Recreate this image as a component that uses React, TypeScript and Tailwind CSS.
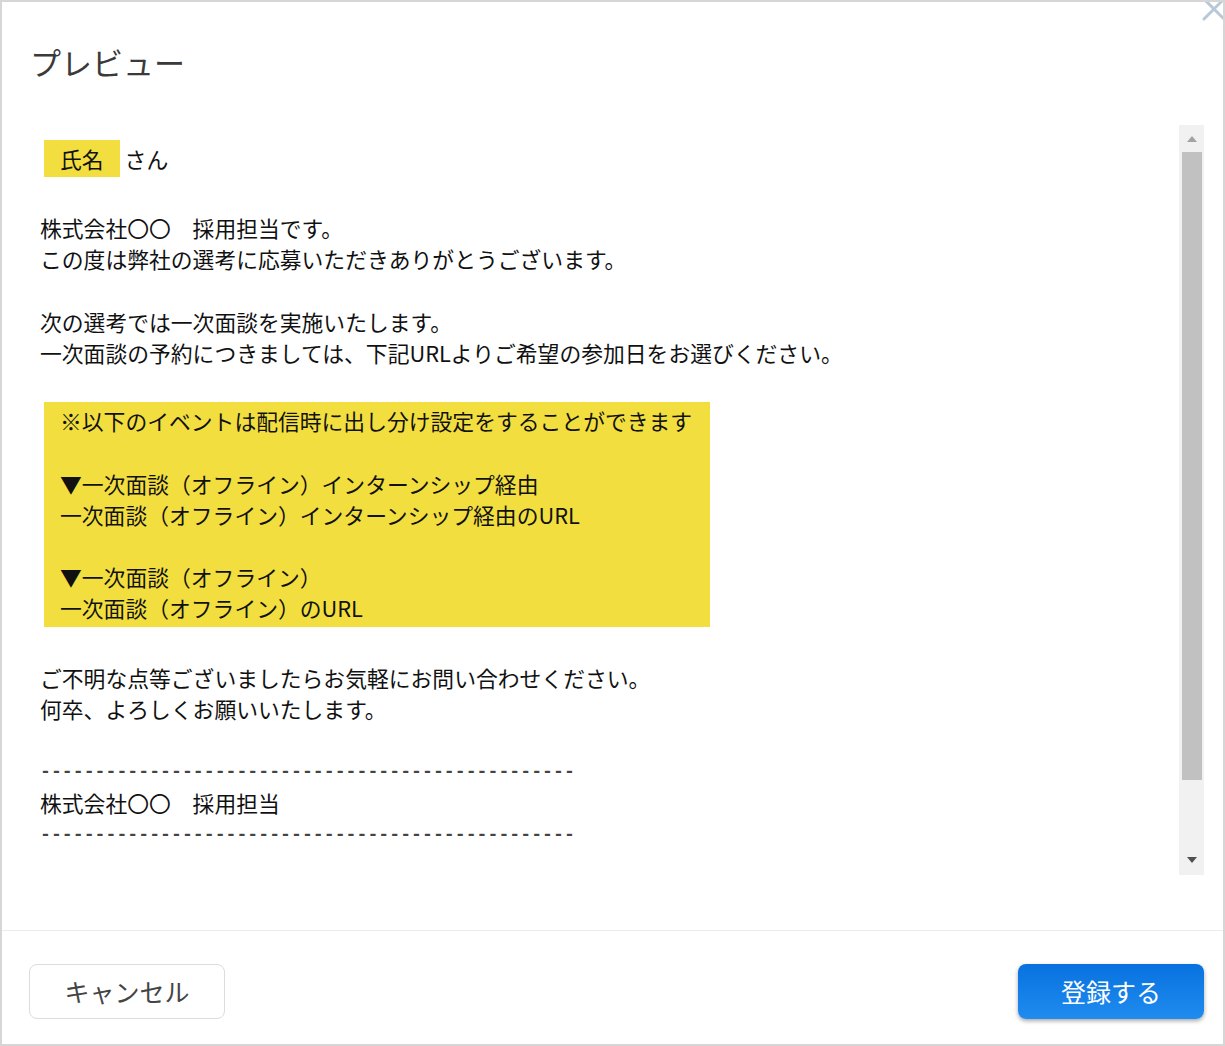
import React from "react";

const jp = { fontFamily: '"Noto Sans CJK JP", "Noto Sans", sans-serif' };

const dashes = "-".repeat(49);

const Line = ({ children }: { children?: React.ReactNode }) => (
  <div className="h-[31.2px] whitespace-pre">{children}</div>
);

const DashLine = () => (
  <div
    className="h-[31.2px] whitespace-pre pt-[3px] text-[18.2px] leading-[28px] font-bold text-[#444]"
    style={{ fontFamily: '"Liberation Mono", monospace' }}
  >
    {dashes}
  </div>
);

const ScrollBar = () => (
  <div className="flex w-[25px] shrink-0 flex-col bg-[#f1f1f1]">
    <div className="flex h-[27px] items-center justify-center">
      <svg width="10" height="6" viewBox="0 0 10 6">
        <path d="M0 6 L5 0 L10 6 Z" fill="#a3a3a3" />
      </svg>
    </div>
    <div className="ml-[3px] h-[628px] w-[20px] bg-[#c1c1c1]" />
    <div className="flex-1" />
    <div className="flex h-[30px] items-center justify-center">
      <svg width="10" height="6" viewBox="0 0 10 6">
        <path d="M0 0 L10 0 L5 6 Z" fill="#505050" />
      </svg>
    </div>
  </div>
);

export default function App() {
  return (
    <div
      className="relative flex h-[1046px] w-[1225px] flex-col overflow-hidden border-2 border-[#d6d6d6] bg-white"
      style={jp}
    >
      {/* close button, clipped by the frame edge */}
      <button className="absolute left-[1199px] top-[-6px]">
        <svg width="26" height="26" viewBox="0 0 26 26">
          <path
            d="M3 23 L23 3 M3 3 L23 23"
            stroke="#b9c8d9"
            strokeWidth="3"
            strokeLinecap="round"
          />
        </svg>
      </button>

      <div className="h-[123px] shrink-0 pl-[28px] pt-[44px]">
        <h1 className="text-[31px] leading-[31px] font-normal text-[#3a3a3a]">
          プレビュー
        </h1>
      </div>

      <div className="flex h-[750px] shrink-0 pr-[19px]">
        <div className="flex-1 pl-[38px] pt-[15px] text-[21.8px] leading-[31.2px] text-[#111]">
          <div className="mb-[4px] flex items-center">
            <span className="ml-[4px] inline-flex h-[37px] items-center bg-[#f2df3f] px-[16px]">
              氏名
            </span>
            <span className="ml-[5px]">さん</span>
          </div>
          <Line />
          <Line>株式会社〇〇　採用担当です。</Line>
          <Line>この度は弊社の選考に応募いただきありがとうございます。</Line>
          <Line />
          <Line>次の選考では一次面談を実施いたします。</Line>
          <Line>
            一次面談の予約につきましては、下記URLよりご希望の参加日をお選びください。
          </Line>
          <div className="h-[3px]" />
          <Line />
          <div className="ml-[4px] w-[666px] bg-[#f2df3f] px-[16px] py-[3px]">
            <Line>※以下のイベントは配信時に出し分け設定をすることができます</Line>
            <Line />
            <Line>▼一次面談（オフライン）インターンシップ経由</Line>
            <Line>一次面談（オフライン）インターンシップ経由のURL</Line>
            <Line />
            <Line>▼一次面談（オフライン）</Line>
            <Line>一次面談（オフライン）のURL</Line>
          </div>
          <div className="h-[4px]" />
          <Line />
          <Line>ご不明な点等ございましたらお気軽にお問い合わせください。</Line>
          <Line>何卒、よろしくお願いいたします。</Line>
          <Line />
          <DashLine />
          <Line>株式会社〇〇　採用担当</Line>
          <DashLine />
        </div>
        <ScrollBar />
      </div>

      <div className="mt-[55px] border-t border-[#ececec]" />

      <div className="flex items-center justify-between pl-[27px] pr-[19px] pt-[33px]">
        <button className="flex h-[55px] w-[196px] items-center justify-center rounded-[8px] border border-[#dcdcdc] bg-white text-[25px] text-[#444]">
          キャンセル
        </button>
        <button className="flex h-[55px] w-[186px] items-center justify-center rounded-[8px] bg-gradient-to-b from-[#0771df] to-[#1f8cef] text-[25px] text-white shadow-[0_2px_4px_rgba(0,0,0,0.35)]">
          登録する
        </button>
      </div>
    </div>
  );
}
